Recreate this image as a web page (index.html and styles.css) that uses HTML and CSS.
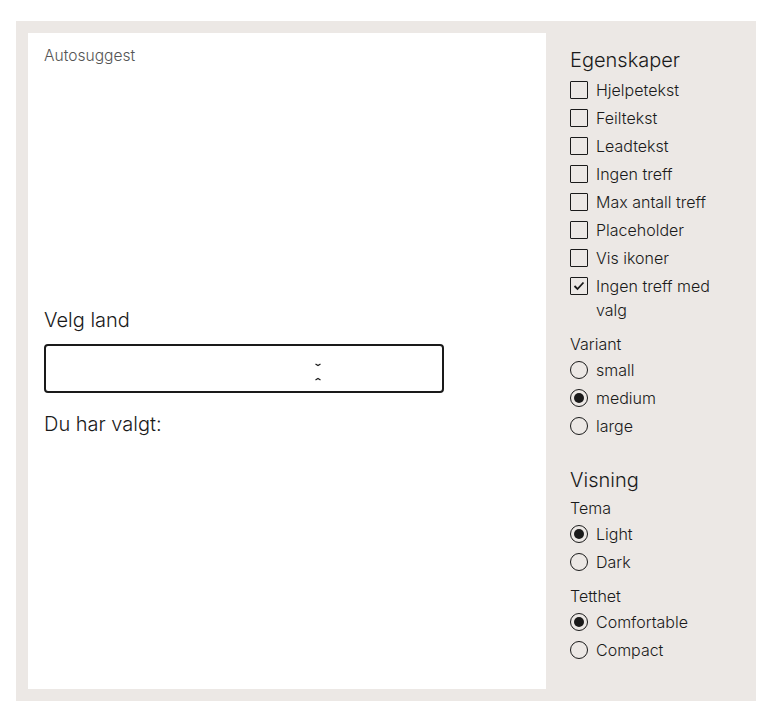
FILE: index.html
```html
<!DOCTYPE html>
<html lang="no">
<head>
<meta charset="utf-8">
<title>Autosuggest</title>
<link rel="stylesheet" href="styles.css">
</head>
<body>
<div class="frame">
  <main class="stage">
    <div class="stage-title">Autosuggest</div>
    <div class="demo">
      <label class="field-label" for="land">Velg land</label>
      <div class="input-box">
        <input id="land" class="input" type="text" value="">
        <svg class="toggle" width="8" height="20" viewBox="0 0 8 20" aria-hidden="true">
          <path d="M1.5 2 L4 3.5 L6.5 2" fill="none" stroke="#1a1a1a" stroke-width="1.2"/>
          <path d="M1.5 18 L4 16.5 L6.5 18" fill="none" stroke="#1a1a1a" stroke-width="1.2"/>
        </svg>
      </div>
      <p class="chosen">Du har valgt:</p>
    </div>
  </main>
  <aside class="panel">
    <section class="section">
      <h2 class="section-title">Egenskaper</h2>
      <div class="opt"><span class="cb"></span><span class="opt-text">Hjelpetekst</span></div>
      <div class="opt"><span class="cb"></span><span class="opt-text">Feiltekst</span></div>
      <div class="opt"><span class="cb"></span><span class="opt-text">Leadtekst</span></div>
      <div class="opt"><span class="cb"></span><span class="opt-text">Ingen treff</span></div>
      <div class="opt"><span class="cb"></span><span class="opt-text">Max antall treff</span></div>
      <div class="opt"><span class="cb"></span><span class="opt-text">Placeholder</span></div>
      <div class="opt"><span class="cb"></span><span class="opt-text">Vis ikoner</span></div>
      <div class="opt"><span class="cb checked"><svg width="12" height="10" viewBox="0 0 12 10"><path d="M1.5 5 L4.5 8 L10.5 1.5" fill="none" stroke="#1a1a1a" stroke-width="1.8"/></svg></span><span class="opt-text">Ingen treff med valg</span></div>
      <div class="group">
        <div class="legend">Variant</div>
        <div class="opt"><span class="rb"></span><span class="opt-text">small</span></div>
        <div class="opt"><span class="rb on"></span><span class="opt-text">medium</span></div>
        <div class="opt"><span class="rb"></span><span class="opt-text">large</span></div>
      </div>
    </section>
    <section class="section section-2">
      <h2 class="section-title">Visning</h2>
      <div class="legend">Tema</div>
      <div class="opt"><span class="rb on"></span><span class="opt-text">Light</span></div>
      <div class="opt"><span class="rb"></span><span class="opt-text">Dark</span></div>
      <div class="group">
        <div class="legend">Tetthet</div>
        <div class="opt"><span class="rb on"></span><span class="opt-text">Comfortable</span></div>
        <div class="opt"><span class="rb"></span><span class="opt-text">Compact</span></div>
      </div>
    </section>
  </aside>
</div>
</body>
</html>
```
FILE: styles.css
```css
* { box-sizing: border-box; }
html, body { margin: 0; padding: 0; background: #ffffff; }
body {
  font-family: "Inter", "Liberation Sans", sans-serif;
  font-weight: 300;
  color: #1a1a1a;
  padding: 21px 14px 17px 16px;
}
.frame {
  background: #ece8e5;
  padding: 12px 0 12px 12px;
  display: flex;
  width: 740px;
  height: 680px;
}
.stage {
  background: #ffffff;
  width: 518px;
  padding: 12px 16px;
}
.stage-title {
  font-size: 15.6px;
  line-height: 22px;
  color: #555555;
}
.demo {
  padding-top: 239px;
}
.field-label {
  display: block;
  font-size: 20px;
  line-height: 28px;
}
.input-box {
  margin-top: 10px;
  width: 400px;
  height: 49px;
  border: 2px solid #1a1a1a;
  border-radius: 4px;
  display: flex;
  align-items: center;
  padding: 0 0 0 12px;
}
.input {
  border: 0;
  outline: none;
  background: transparent;
  font: inherit;
  font-size: 18px;
  width: 244px;
  padding: 0;
}
.toggle { display: block; margin-left: 12px; margin-top: 7px; }
.chosen {
  margin: 17px 0 0;
  font-size: 20px;
  line-height: 28px;
}
.panel {
  width: 210px;
  padding: 13px 24px 0 24px;
}
.section-title {
  margin: 0 0 2px;
  font-size: 20px;
  line-height: 28px;
  font-weight: 300;
}
.section-2 { margin-top: 26px; }
.opt {
  display: flex;
  align-items: flex-start;
  gap: 8px;
  padding: 2px 0;
  font-size: 16px;
  line-height: 24px;
}
.opt-text { flex: 1; }
.cb {
  flex: none;
  width: 18px;
  height: 18px;
  margin-top: 3px;
  border: 1.5px solid #1a1a1a;
  border-radius: 1px;
  display: flex;
  align-items: center;
  justify-content: center;
}
.rb {
  flex: none;
  width: 18px;
  height: 18px;
  margin-top: 3px;
  border: 1.5px solid #1a1a1a;
  border-radius: 50%;
  display: flex;
  align-items: center;
  justify-content: center;
}
.rb.on::after {
  content: "";
  width: 10px;
  height: 10px;
  border-radius: 50%;
  background: #1a1a1a;
}
.group { margin-top: 8px; }
.legend {
  font-size: 16px;
  line-height: 24px;
}
```
